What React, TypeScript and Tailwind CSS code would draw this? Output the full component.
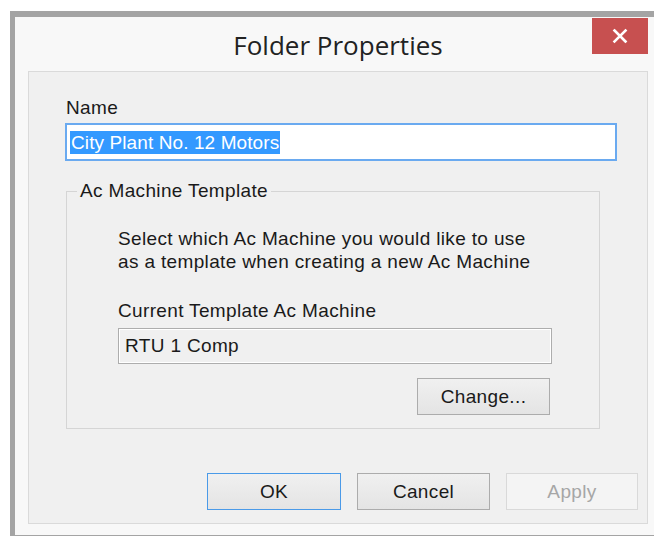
import React from "react";

const font = "font-['Liberation_Sans',Arial,sans-serif] text-[19px] leading-[22px] tracking-[0.35px]";
const body = `${font} text-[#1a1a1a]`;

function DialogButton({
  label,
  variant = "normal",
  width,
}: {
  label: string;
  variant?: "normal" | "default" | "disabled";
  width: string;
}) {
  const tone =
    variant === "default"
      ? "border-[#4a9ae8] bg-gradient-to-b from-[#f0f0f0] to-[#e4e4e4] text-[#1a1a1a]"
      : variant === "disabled"
      ? "border-[#d9d9d9] bg-[#f4f4f4] text-[#a6a6a6]"
      : "border-[#acacac] bg-gradient-to-b from-[#f0f0f0] to-[#e4e4e4] text-[#1a1a1a]";
  return (
    <button
      type="button"
      className={`${width} h-[37px] border flex items-center justify-center ${tone} ${font}`}
    >
      {label}
    </button>
  );
}

export default function App() {
  return (
    <div className="w-[654px] h-[536px] bg-white overflow-hidden pt-[11px] pl-[10px]">
      {/* window frame */}
      <div className="w-[651px] h-[525px] border-t-[6px] border-l-[5px] border-b border-[#a4a4a4] bg-[#f8f8f8] flex flex-col pl-[13px] pr-[13px]">
        {/* title bar */}
        <div className="relative h-[54px] flex items-center justify-center">
          <span className="font-['Open_Sans',sans-serif] text-[26px] leading-[34px] text-[#222222] mt-[2px]">
            Folder Properties
          </span>
          <div className="absolute right-0 top-[1px] w-[56px] h-[36px] bg-[#c75050] flex items-center justify-center">
            <svg width="16" height="16" viewBox="0 0 16 16">
              <path d="M2.5 2.5 L13.5 13.5 M13.5 2.5 L2.5 13.5" stroke="#ffffff" strokeWidth="2.6" strokeLinecap="square" />
            </svg>
          </div>
        </div>

        {/* client area */}
        <div className={`h-[453px] border border-[#dadada] bg-[#f0f0f0] flex flex-col ${body}`}>
          <div className="ml-[37px] mt-[25px]">Name</div>
          <div className="ml-[36px] mt-[4px] w-[552px] h-[38px] border-2 border-[#6aaaf0] bg-white flex items-center pl-[3px]">
            <span className="bg-[#3399ff] text-white leading-[23px] px-[1px] tracking-[0.1px]">City Plant No. 12 Motors</span>
          </div>

          {/* group box */}
          <div className="relative ml-[37px] mt-[30px] w-[534px] h-[238px] border border-[#d5d5d5] pl-[51px] flex flex-col">
            <span className="absolute left-[10px] -top-[12px] px-[3px] bg-[#f0f0f0]">Ac Machine Template</span>
            <div className="mt-[35px] leading-[23px]">
              <div>Select which Ac Machine you would like to use</div>
              <div>as a template when creating a new Ac Machine</div>
            </div>
            <div className="mt-[27px]">Current Template Ac Machine</div>
            <div className="mt-[6px] w-[434px] h-[36px] border border-[#adadad] shadow-[inset_0_0_0_1px_#ffffff] bg-[#f0f0f0] flex items-center pl-[6px]">
              RTU 1 Comp
            </div>
            <div className="w-[434px] flex justify-end mt-[14px] pr-[2px]">
              <DialogButton label="Change..." width="w-[133px]" />
            </div>
          </div>

          {/* dialog buttons */}
          <div className="mt-[44px] flex justify-end pr-[9px] gap-[16px]">
            <DialogButton label="OK" variant="default" width="w-[134px]" />
            <DialogButton label="Cancel" width="w-[133px]" />
            <DialogButton label="Apply" variant="disabled" width="w-[132px]" />
          </div>
        </div>
      </div>
    </div>
  );
}
